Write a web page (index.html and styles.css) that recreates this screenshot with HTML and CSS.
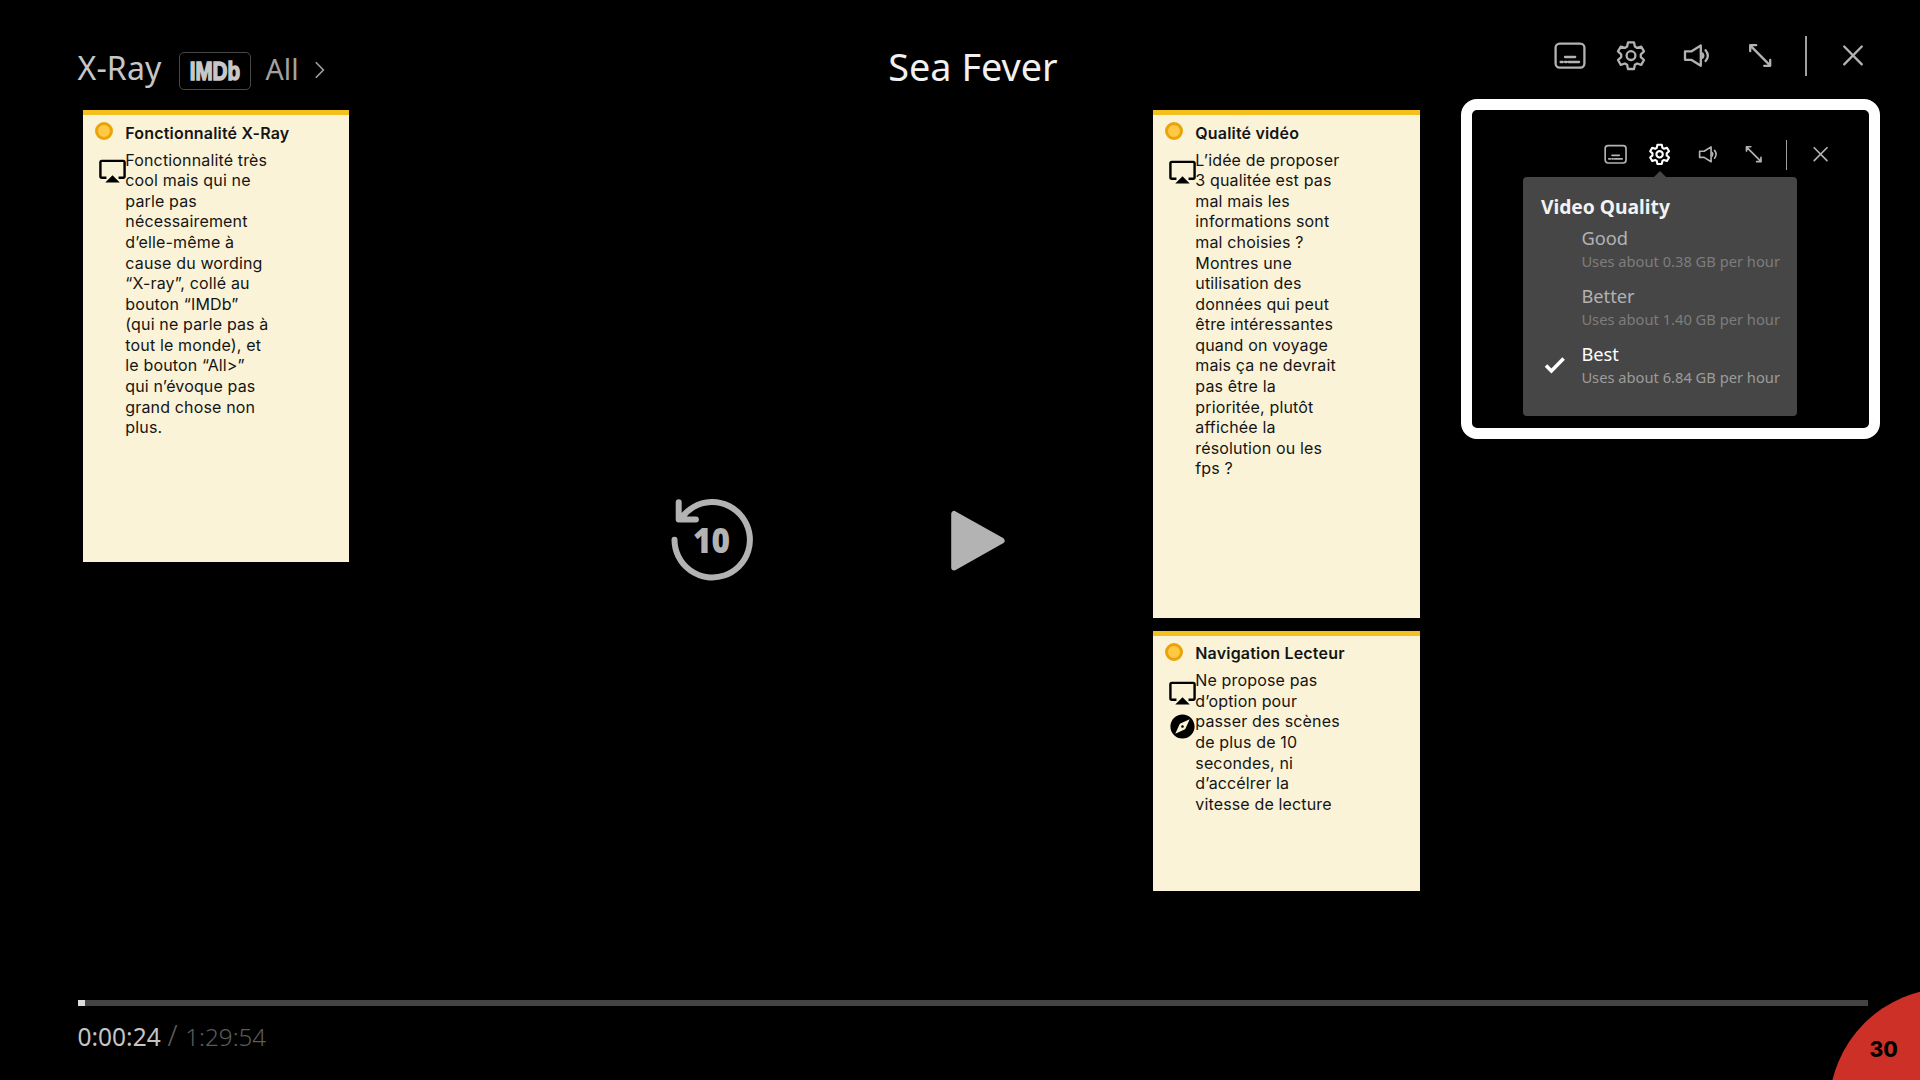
FILE: index.html
```
<!DOCTYPE html>
<html lang="fr">
<head>
<meta charset="utf-8">
<title>Sea Fever</title>
<link rel="stylesheet" href="styles.css">
</head>
<body>
<svg class="sprite" aria-hidden="true">
  <symbol id="subtitles" viewBox="0 0 32 32">
    <rect x="1.6" y="3.6" width="28.8" height="24" rx="4"/>
    <path d="M11 17h10.2M6.6 22h2.2M11 22h1.6M14.5 22h10.6"/>
  </symbol>
  <symbol id="gear" viewBox="0 0 32 32">
    <path d="M13 2.4h6l.9 4.2 2.2 1.3 4.1-1.3 2.8 4.8-3.2 2.9v2.8l3.2 2.9-2.8 4.8-4.1-1.3-2.2 1.3-.9 4.2h-6l-.9-4.2-2.2-1.3-4.1 1.3L3 20l3.2-2.9v-2.8L3 11.4l2.8-4.8 4.1 1.3 2.2-1.3z"/>
    <circle cx="16" cy="15.6" r="4.4"/>
  </symbol>
  <symbol id="volume" viewBox="0 0 32 32">
    <path d="M5 11.4h6.2l9.6-6v20.4l-9.6-6H5z"/>
    <path d="M22.4 13.4q1.8 2.2 0 4.4M25.6 10.2q4.4 5.4 0 10.8"/>
  </symbol>
  <symbol id="resize" viewBox="0 0 32 32">
    <path d="M6.4 5.6L26 25.4M6.2 11.2V5.2h6M26.2 19.8v6h-6"/>
  </symbol>
  <symbol id="close" viewBox="0 0 32 32">
    <path d="M7.2 6.5l17.6 17.9M24.8 6.5L7.2 24.4"/>
  </symbol>
  <symbol id="screen" viewBox="0 0 24 24">
    <path d="M6 22h12l-6-6-6 6zM21 3H3c-1.1 0-2 .9-2 2v12c0 1.1.9 2 2 2h4v-2H3V5h18v12h-4v2h4c1.1 0 2-.9 2-2V5c0-1.1-.9-2-2-2z"/>
  </symbol>
  <symbol id="compass" viewBox="0 0 24 24">
    <path d="M12 10.9c-.61 0-1.1.49-1.1 1.1s.49 1.1 1.1 1.1c.61 0 1.1-.49 1.1-1.1s-.49-1.1-1.1-1.1zM12 2C6.48 2 2 6.48 2 12s4.48 10 10 10 10-4.48 10-10S17.52 2 12 2zm2.19 12.19L6 18l3.81-8.19L18 6l-3.81 8.19z"/>
  </symbol>
</svg>

<div class="player">
  <header class="header">
    <div class="xray">
      <span class="xray-label">X-Ray</span>
      <span class="imdb"><svg width="60" height="34" viewBox="0 0 60 34"><text class="imdb-text" x="4.7" y="25.6" textLength="50.4" lengthAdjust="spacingAndGlyphs">IMDb</text></svg></span>
      <span class="xray-all">All</span>
      <svg class="chevron" width="12" height="18" viewBox="0 0 12 18"><path d="M1.8 1.2l7.6 7.8-7.6 7.8"/></svg>
    </div>
    <h1 class="title">Sea Fever</h1>
    <nav class="toolbar">
      <svg class="icon"><use href="#subtitles"/></svg>
      <svg class="icon gear"><use href="#gear"/></svg>
      <svg class="icon volume"><use href="#volume"/></svg>
      <svg class="icon resize"><use href="#resize"/></svg>
      <span class="divider"></span>
      <svg class="icon close"><use href="#close"/></svg>
    </nav>
  </header>

  <main class="stage">
    <section class="notes">
      <article class="note note-xray">
        <span class="dot"></span>
        <h2>Fonctionnalité X-Ray</h2>
        <div class="tags"><svg><use href="#screen"/></svg></div>
        <p>Fonctionnalité très<br>cool mais qui ne<br>parle pas<br>nécessairement<br>d’elle-même à<br>cause du wording<br>“X-ray”, collé au<br>bouton “IMDb”<br>(qui ne parle pas à<br>tout le monde), et<br>le bouton “All&gt;”<br>qui n’évoque pas<br>grand chose non<br>plus.</p>
      </article>
    </section>

    <section class="controls">
      <svg class="rewind" width="86" height="86" viewBox="0 0 86 86">
        <path d="M5.5 42.8A37.7 37.7 0 1 0 12 21.6M9.7 5.2v17.2h17.2"/>
        <text x="42.4" y="55.6" textLength="37" lengthAdjust="spacingAndGlyphs">10</text>
      </svg>
      <svg class="play" width="58" height="64" viewBox="0 0 58 64"><path d="M4.2 5v53.4L51.6 31.7z"/></svg>
    </section>

    <section class="notes">
      <article class="note note-quality">
        <span class="dot"></span>
        <h2>Qualité vidéo</h2>
        <div class="tags"><svg><use href="#screen"/></svg></div>
        <p>L’idée de proposer<br>3 qualitée est pas<br>mal mais les<br>informations sont<br>mal choisies ?<br>Montres une<br>utilisation des<br>données qui peut<br>être intéressantes<br>quand on voyage<br>mais ça ne devrait<br>pas être la<br>prioritée, plutôt<br>affichée la<br>résolution ou les<br>fps ?</p>
      </article>
      <article class="note note-nav">
        <span class="dot"></span>
        <h2>Navigation Lecteur</h2>
        <div class="tags"><svg><use href="#screen"/></svg><svg><use href="#compass"/></svg></div>
        <p>Ne propose pas<br>d’option pour<br>passer des scènes<br>de plus de 10<br>secondes, ni<br>d’accélrer la<br>vitesse de lecture</p>
      </article>
    </section>

    <aside class="panel">
      <nav class="toolbar small">
        <svg class="icon"><use href="#subtitles"/></svg>
        <svg class="icon gear active"><use href="#gear"/></svg>
        <svg class="icon volume"><use href="#volume"/></svg>
        <svg class="icon resize"><use href="#resize"/></svg>
        <span class="divider"></span>
        <svg class="icon close"><use href="#close"/></svg>
      </nav>
      <div class="popup">
        <h3>Video Quality</h3>
        <ul>
          <li><b>Good</b><small>Uses about 0.38 GB per hour</small></li>
          <li><b>Better</b><small>Uses about 1.40 GB per hour</small></li>
          <li class="selected">
            <svg class="check" width="22" height="18" viewBox="0 0 22 18"><path d="M2 9.6l5.4 5.4L19.6 2.4"/></svg>
            <b>Best</b><small>Uses about 6.84 GB per hour</small>
          </li>
        </ul>
      </div>
    </aside>
  </main>

  <footer class="footer">
    <div class="progress"><div class="played"></div></div>
    <div class="time"><span class="current">0:00:24</span><span class="slash">/</span><span class="total">1:29:54</span></div>
  </footer>
  <div class="page-number"><span>30</span></div>
</div>
</body>
</html>
```
FILE: styles.css
```
* { box-sizing: border-box; margin: 0; padding: 0; }

body {
  background: #000;
  font-family: "Noto Sans", "Open Sans", sans-serif;
}

.sprite { position: absolute; width: 0; height: 0; }

.player {
  position: relative;
  display: flex;
  flex-direction: column;
  width: 1920px;
  height: 1080px;
  overflow: hidden;
  background: #000;
}

/* Header */
.header {
  display: grid;
  grid-template-columns: 810.8px 665.7px auto;
  align-items: start;
  height: 99px;
  padding-left: 77.5px;
}
.xray { display: flex; align-items: flex-start; line-height: 40px; white-space: nowrap; }
.xray-label { width: 101.5px; margin-top: 48.3px; font-size: 32px; letter-spacing: .15px; color: #c6c6c6; }
.imdb {
  display: flex;
  align-items: center;
  justify-content: center;
  width: 72px;
  height: 38px;
  margin-top: 52.2px;
  border: 1.5px solid #484848;
  border-radius: 5px;
}
.imdb svg { flex: none; overflow: visible; }
.imdb-text {
  font: bold 25.5px "Liberation Sans", sans-serif;
  fill: #c8c8c8;
  stroke: #c8c8c8;
  stroke-width: 1.5px;
}
.xray-all { width: 48.5px; margin: 49.3px 0 0 14.5px; font-size: 28.6px; color: #a2a2a2; }
.chevron { margin-top: 61px; fill: none; stroke: #a2a2a2; stroke-width: 1.6; }
.title { margin-top: 46.5px; font-size: 37.8px; line-height: 40px; font-weight: 400; color: #f1f1f1; white-space: nowrap; }

.toolbar {
  display: flex;
  align-items: center;
  height: 1.28em;
  margin-top: 35.5px;
  font-size: 32px;
}
.icon {
  flex: none;
  width: 1em;
  height: 1em;
  fill: none;
  stroke: #b3b3b3;
  stroke-width: 2.3;
  stroke-linecap: round;
  stroke-linejoin: round;
}
.icon.active { stroke: #fff; stroke-width: 2.9; }
.gear { margin-left: .914em; }
.volume { margin-left: 1.03em; }
.resize { margin-left: 1em; }
.divider { width: 2px; height: 1.28em; margin-left: .9em; background: #a0a0a0; }
.close { margin-left: .95em; }

/* Stage */
.stage {
  display: grid;
  grid-template-columns: 266.4px 803.6px 266.6px 41px 420px;
  align-items: start;
  height: 901px;
  padding-left: 83px;
}
.notes { display: flex; flex-direction: column; gap: 13px; padding-top: 11px; }
.note {
  display: grid;
  grid-template-columns: 42.3px 1fr;
  grid-template-rows: 34px 1fr;
  background: #fbf3d7;
  border-top: 5px solid #f4c01e;
  color: #151515;
  font-family: Inter, sans-serif;
}
.note-xray { height: 451.7px; }
.note-quality { height: 507.5px; }
.note-nav { height: 260.5px; }
.dot {
  width: 18px;
  height: 18px;
  margin: 7px 0 0 12.4px;
  border: 3px solid #eaa40a;
  border-radius: 50%;
  background: #ffc845;
}
.note h2 { padding-top: 7.6px; font-size: 16px; line-height: 20px; font-weight: 600; letter-spacing: .18px; white-space: nowrap; }
.note p { padding-top: .7px; font-size: 16px; line-height: 20.58px; letter-spacing: .15px; white-space: nowrap; }
.tags { display: flex; flex-direction: column; gap: 5.5px; padding: 8.3px 0 0 14.6px; }
.note-xray .tags { padding-top: 6.8px; }
.tags svg { width: 29px; height: 29px; fill: #000; }

.controls { display: flex; align-items: flex-start; padding-left: 320px; }
.rewind { margin-top: 398.2px; }
.rewind path { fill: none; stroke: #b3b3b3; stroke-width: 6; stroke-linecap: round; stroke-linejoin: round; }
.rewind text { font: 800 36px "Open Sans", sans-serif; fill: #b3b3b3; text-anchor: middle; }
.play { margin: 409.5px 0 0 194.7px; }
.play path { fill: #b3b3b3; stroke: #b3b3b3; stroke-width: 6; stroke-linejoin: round; }

/* Quality panel */
.panel {
  grid-column: 5;
  width: 419px;
  height: 340px;
  border: 11px solid #fff;
  border-radius: 16px;
  background: #000;
}
.small { margin: 30px 0 0 132.5px; font-size: 23.2px; }
.small .divider { width: 1.4px; }
.popup {
  position: relative;
  width: 274.5px;
  height: 238.5px;
  margin: 7.4px 0 0 51px;
  padding: 19.7px 0 0 18.3px;
  border-radius: 4px;
  background: #464646;
}
.popup::before {
  content: "";
  position: absolute;
  top: -6.5px;
  left: 130px;
  border: 7px solid transparent;
  border-top: 0;
  border-bottom-color: #464646;
}
.popup h3 { font-size: 19.25px; line-height: 20px; color: #f2f2f2; }
.popup ul { list-style: none; }
.popup li { position: relative; height: 57.7px; padding-left: 40.5px; color: #b2b2b2; white-space: nowrap; }
.popup b { display: block; padding-top: 10.5px; font-size: 18.3px; line-height: 22px; font-weight: 400; }
.popup small { display: block; font-size: 14.7px; line-height: 24px; color: #7d7d7d; }
.popup .selected { color: #fff; }
.popup .selected small { color: #9c9c9c; }
.check { position: absolute; left: 3px; top: 24px; fill: none; stroke: #fff; stroke-width: 3.6; }

/* Footer */
.footer { padding-left: 77.5px; }
.progress { width: 1790px; height: 6px; background: #444; }
.played { width: 7.5px; height: 6px; background: #ddd; }
.time { display: flex; align-items: baseline; padding-top: 14.2px; font-size: 24.5px; line-height: 30px; }
.current { width: 90px; color: #c4c4c4; }
.slash { width: 17.8px; font-size: 29px; font-weight: 300; color: #5c5c5c; }
.total { font-size: 24.2px; font-weight: 300; color: #5c5c5c; }

.page-number {
  position: absolute;
  left: 1829px;
  top: 988px;
  width: 241px;
  height: 241px;
  padding: 47px 0 0 40.5px;
  border-radius: 50%;
  background: #cc3027;
  font: 800 21px/30px Inter, sans-serif;
  color: #000;
}
```
